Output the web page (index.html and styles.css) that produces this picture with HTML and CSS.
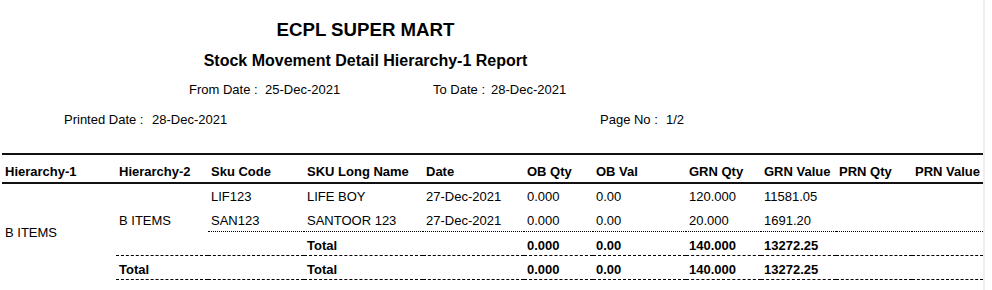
FILE: index.html
```html
<!DOCTYPE html>
<html>
<head>
<meta charset="utf-8">
<link rel="stylesheet" href="styles.css">
</head>
<body>
<div class="page">
  <header class="report-head">
    <div class="titles">
      <h1 class="title">ECPL SUPER MART</h1>
      <h2 class="subtitle">Stock Movement Detail Hierarchy-1 Report</h2>
    </div>
    <div class="meta meta-dates">
      <span class="lbl">From Date :</span><span class="val">25-Dec-2021</span>
      <span class="lbl">To Date :</span><span class="val">28-Dec-2021</span>
    </div>
    <div class="meta meta-print">
      <span class="lbl">Printed Date :</span><span class="val">28-Dec-2021</span>
      <span class="lbl">Page No :</span><span class="val">1/2</span>
    </div>
  </header>

  <table class="report">
    <colgroup>
      <col class="c1"><col class="c2"><col class="c3"><col class="c4"><col class="c5"><col class="c6">
      <col class="c7"><col class="c8"><col class="c9"><col class="c10"><col class="c11">
    </colgroup>
    <thead>
      <tr>
        <th>Hierarchy-1</th><th>Hierarchy-2</th><th>Sku Code</th><th>SKU Long Name</th><th>Date</th>
        <th>OB Qty</th><th>OB Val</th><th>GRN Qty</th><th>GRN Value</th><th>PRN Qty</th><th>PRN Value</th>
      </tr>
    </thead>
    <tbody>
      <tr>
        <td rowspan="4" class="mid">B ITEMS</td>
        <td rowspan="3" class="mid dash">B ITEMS</td>
        <td>LIF123</td><td>LIFE BOY</td><td>27-Dec-2021</td><td>0.000</td><td>0.00</td><td>120.000</td><td>11581.05</td><td></td><td></td>
      </tr>
      <tr class="dot">
        <td>SAN123</td><td>SANTOOR 123</td><td>27-Dec-2021</td><td>0.000</td><td>0.00</td><td>20.000</td><td>1691.20</td><td></td><td></td>
      </tr>
      <tr class="sub">
        <td></td><td>Total</td><td></td><td>0.000</td><td>0.00</td><td>140.000</td><td>13272.25</td><td></td><td></td>
      </tr>
      <tr class="sub">
        <td>Total</td><td></td><td>Total</td><td></td><td>0.000</td><td>0.00</td><td>140.000</td><td>13272.25</td><td></td><td></td>
      </tr>
    </tbody>
  </table>
</div>
</body>
</html>
```
FILE: styles.css
```css
html, body {
  margin: 0;
  padding: 0;
  background: #fff;
}

body {
  font-family: "Liberation Sans", Arial, sans-serif;
  color: #000;
  font-size: 13px;
}

.page {
  width: 981px;
  min-height: 290px;
  padding-left: 2px;
  border-right: 2px solid #eeeeee;
}

.report-head {
  display: flex;
  flex-direction: column;
}

.titles {
  width: 727px;
  text-align: center;
}

.title {
  margin: 19px 0 0;
  font-size: 18.67px;
  line-height: 22px;
  font-weight: bold;
}

.subtitle {
  margin: 10px 0 0;
  font-size: 16px;
  line-height: 20px;
  font-weight: bold;
}

.meta {
  display: grid;
  line-height: 15px;
  font-size: 13px;
}

.meta-dates {
  margin-top: 11px;
  padding-left: 187px;
  grid-template-columns: 76px 168px 58px auto;
}

.meta-print {
  margin-top: 15px;
  padding-left: 62px;
  grid-template-columns: 88px 448px 66px auto;
}

.report {
  margin-top: 26px;
  width: 981px;
  border-collapse: separate;
  border-spacing: 0;
  table-layout: fixed;
}

.c1 { width: 114px; }
.c2 { width: 92px; }
.c3 { width: 96px; }
.c4 { width: 119px; }
.c5 { width: 101px; }
.c6 { width: 69px; }
.c7 { width: 93px; }
.c8 { width: 75px; }
.c9 { width: 75px; }
.c10 { width: 76px; }
.c11 { width: 71px; }

.report th {
  text-align: left;
  font-weight: bold;
  line-height: 15px;
  padding: 9px 3px 3px;
  border-top: 2px solid #111;
  border-bottom: 2px solid #111;
  white-space: nowrap;
}

.report td {
  line-height: 15px;
  padding: 5px 3px 4px;
  white-space: nowrap;
  vertical-align: top;
}

.report td.mid {
  vertical-align: middle;
}

.report td.dash {
  border-bottom: 1px dashed #000;
  padding-bottom: 3px;
}

.report tr.dot td {
  border-bottom: 1px dotted #000;
  padding-bottom: 3px;
}

.report tr.sub td {
  font-weight: bold;
  border-bottom: 1px dashed #000;
  padding-top: 6px;
  padding-bottom: 2px;
}
```
